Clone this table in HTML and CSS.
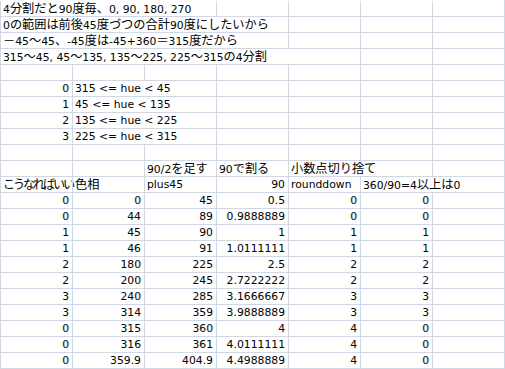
FILE: index.html
```html
<!DOCTYPE html>
<html lang="ja">
<head>
<meta charset="utf-8">
<title>hue</title>
<link rel="stylesheet" href="styles.css">
</head>
<body>
<div class="sheet">
  <div class="c s3">4<span class="j">分割だと</span>90<span class="j">度毎、</span>0, 90, 180, 270</div><div class="c"></div><div class="c"></div><div class="c"></div><div class="c"></div>
  <div class="c s4">0<span class="j">の範囲は前後</span>45<span class="j">度づつの合計</span>90<span class="j">度にしたいから</span></div><div class="c"></div><div class="c"></div><div class="c"></div>
  <div class="c s4"><span class="j">－</span>45<span class="j">～</span>45<span class="j">、</span>-45<span class="j">度は</span>-45+360<span class="j">＝</span>315<span class="j">度だから</span></div><div class="c"></div><div class="c"></div><div class="c"></div>
  <div class="c s5">315<span class="j">～</span>45, 45<span class="j">～</span>135, 135<span class="j">～</span>225, 225<span class="j">～</span>315<span class="j">の</span>4<span class="j">分割</span></div><div class="c"></div><div class="c"></div>
  <div class="c"></div><div class="c"></div><div class="c"></div><div class="c"></div><div class="c"></div><div class="c"></div><div class="c"></div>
  <div class="c n">0</div><div class="c s2">315 &lt;= hue &lt; 45</div><div class="c"></div><div class="c"></div><div class="c"></div><div class="c"></div>
  <div class="c n">1</div><div class="c s2">45 &lt;= hue &lt; 135</div><div class="c"></div><div class="c"></div><div class="c"></div><div class="c"></div>
  <div class="c n">2</div><div class="c s2">135 &lt;= hue &lt; 225</div><div class="c"></div><div class="c"></div><div class="c"></div><div class="c"></div>
  <div class="c n">3</div><div class="c s2">225 &lt;= hue &lt; 315</div><div class="c"></div><div class="c"></div><div class="c"></div><div class="c"></div>
  <div class="c"></div><div class="c"></div><div class="c"></div><div class="c"></div><div class="c"></div><div class="c"></div><div class="c"></div>
  <div class="c"></div><div class="c"></div><div class="c">90/2<span class="j">を足す</span></div><div class="c">90<span class="j">で割る</span></div><div class="c s2"><span class="j">小数点切り捨て</span></div><div class="c"></div>
  <div class="c"><span class="j tight">こうなればいい</span></div><div class="c"><span class="j">色相</span></div><div class="c">plus45</div><div class="c n">90</div><div class="c">rounddown</div><div class="c s2">360/90=4<span class="j">以上は</span>0</div>
  <div class="c n">0</div><div class="c n">0</div><div class="c n">45</div><div class="c n">0.5</div><div class="c n">0</div><div class="c n">0</div><div class="c"></div>
  <div class="c n">0</div><div class="c n">44</div><div class="c n">89</div><div class="c n">0.9888889</div><div class="c n">0</div><div class="c n">0</div><div class="c"></div>
  <div class="c n">1</div><div class="c n">45</div><div class="c n">90</div><div class="c n">1</div><div class="c n">1</div><div class="c n">1</div><div class="c"></div>
  <div class="c n">1</div><div class="c n">46</div><div class="c n">91</div><div class="c n">1.0111111</div><div class="c n">1</div><div class="c n">1</div><div class="c"></div>
  <div class="c n">2</div><div class="c n">180</div><div class="c n">225</div><div class="c n">2.5</div><div class="c n">2</div><div class="c n">2</div><div class="c"></div>
  <div class="c n">2</div><div class="c n">200</div><div class="c n">245</div><div class="c n">2.7222222</div><div class="c n">2</div><div class="c n">2</div><div class="c"></div>
  <div class="c n">3</div><div class="c n">240</div><div class="c n">285</div><div class="c n">3.1666667</div><div class="c n">3</div><div class="c n">3</div><div class="c"></div>
  <div class="c n">3</div><div class="c n">314</div><div class="c n">359</div><div class="c n">3.9888889</div><div class="c n">3</div><div class="c n">3</div><div class="c"></div>
  <div class="c n">0</div><div class="c n">315</div><div class="c n">360</div><div class="c n">4</div><div class="c n">4</div><div class="c n">0</div><div class="c"></div>
  <div class="c n">0</div><div class="c n">316</div><div class="c n">361</div><div class="c n">4.0111111</div><div class="c n">4</div><div class="c n">0</div><div class="c"></div>
  <div class="c n">0</div><div class="c n">359.9</div><div class="c n">404.9</div><div class="c n">4.4988889</div><div class="c n">4</div><div class="c n">0</div><div class="c"></div>
</div>
</body>
</html>
```

FILE: styles.css
```css
html, body {
  margin: 0;
  padding: 0;
  background: #ffffff;
}

.sheet {
  display: grid;
  grid-template-columns: repeat(7, 72px);
  grid-auto-rows: 16px;
  width: 504px;
  padding-top: 1px;
  border-right: 1px solid #d0d7e5;
  font-family: "DejaVu Sans", "Noto Sans CJK JP", sans-serif;
  font-size: 10.8px;
  color: #000000;
}

.c {
  box-sizing: border-box;
  border-left: 1px solid #d0d7e5;
  border-bottom: 1px solid #d0d7e5;
  padding: 0 3px 0 2px;
  line-height: 15px;
  white-space: nowrap;
}

.j {
  font-family: "Noto Sans CJK JP", sans-serif;
  font-size: 12.2px;
  line-height: 15px;
}

.tight {
  letter-spacing: -2.2px;
}

.n {
  text-align: right;
}

.s2 { grid-column: span 2; }
.s3 { grid-column: span 3; }
.s4 { grid-column: span 4; }
.s5 { grid-column: span 5; }
```
